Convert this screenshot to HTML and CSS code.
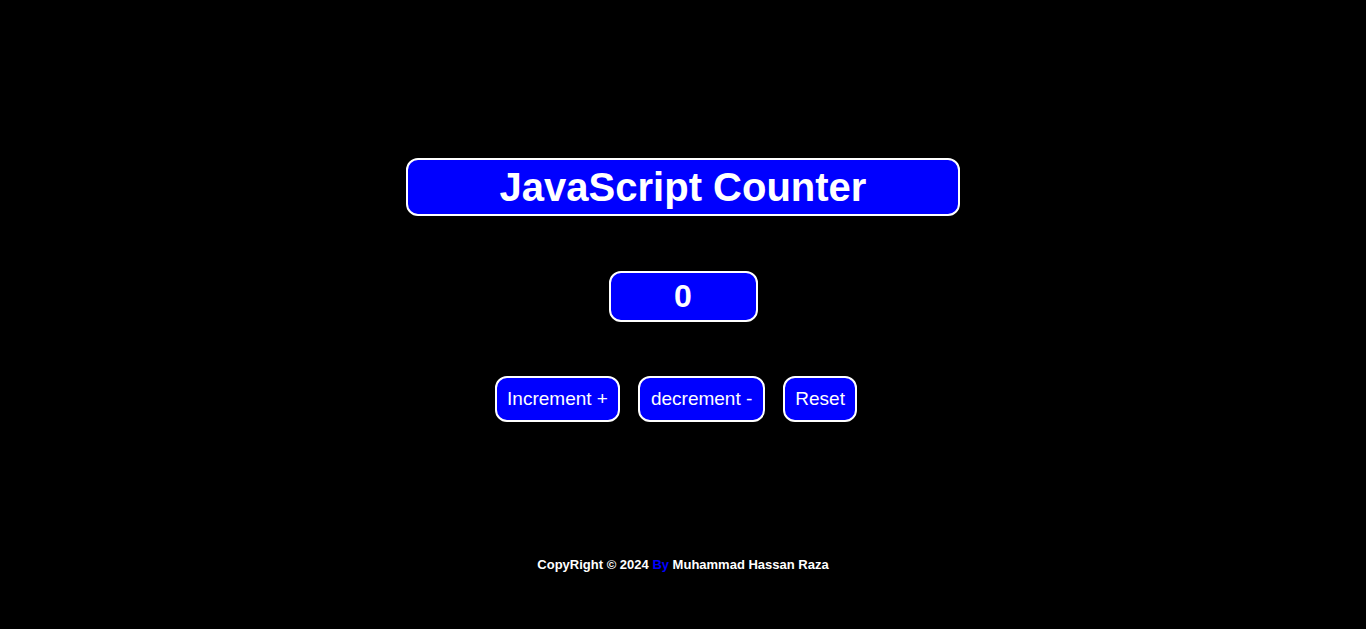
FILE: index.html
```html
<!DOCTYPE html>
<html lang="en">
<head>
<meta charset="UTF-8">
<title>JavaScript Counter</title>
<link rel="stylesheet" href="styles.css">
</head>
<body>
<main class="app">
  <h1 class="title">JavaScript Counter</h1>
  <div class="count">0</div>
  <div class="controls">
    <button class="btn">Increment +</button>
    <button class="btn">decrement -</button>
    <button class="btn">Reset</button>
  </div>
</main>
<footer class="footer">CopyRight © 2024 <span class="by">By</span> Muhammad Hassan Raza</footer>
</body>
</html>
```
FILE: styles.css
```css
* { box-sizing: border-box; }
html, body { margin: 0; padding: 0; }
body {
  background: #000;
  color: #fff;
  font-family: "Liberation Sans", Arial, sans-serif;
  min-height: 629px;
}
.app {
  display: flex;
  flex-direction: column;
  align-items: center;
  padding-top: 158px;
}
.title {
  margin: 0;
  width: 554px;
  padding: 4px 0;
  background: #0000ff;
  border: 2px solid #fff;
  border-radius: 12px;
  font-size: 40px;
  font-weight: 700;
  line-height: 46px;
  text-align: center;
}
.count {
  margin-top: 55px;
  width: 149px;
  padding: 5px 0;
  background: #0000ff;
  border: 2px solid #fff;
  border-radius: 12px;
  font-size: 32px;
  font-weight: 700;
  line-height: 37px;
  text-align: center;
}
.controls {
  margin-top: 54px;
  display: flex;
  gap: 18px;
  padding-right: 14px;
}
.btn {
  background: #0000ff;
  color: #fff;
  border: 2px solid #fff;
  border-radius: 12px;
  padding: 10px 10.5px;
  font-family: "Liberation Sans", Arial, sans-serif;
  font-size: 19px;
  line-height: 22px;
  cursor: pointer;
}
.footer {
  margin-top: 135px;
  text-align: center;
  font-size: 13px;
  font-weight: 700;
  line-height: 15px;
}
.by { color: #0000ff; }
```
